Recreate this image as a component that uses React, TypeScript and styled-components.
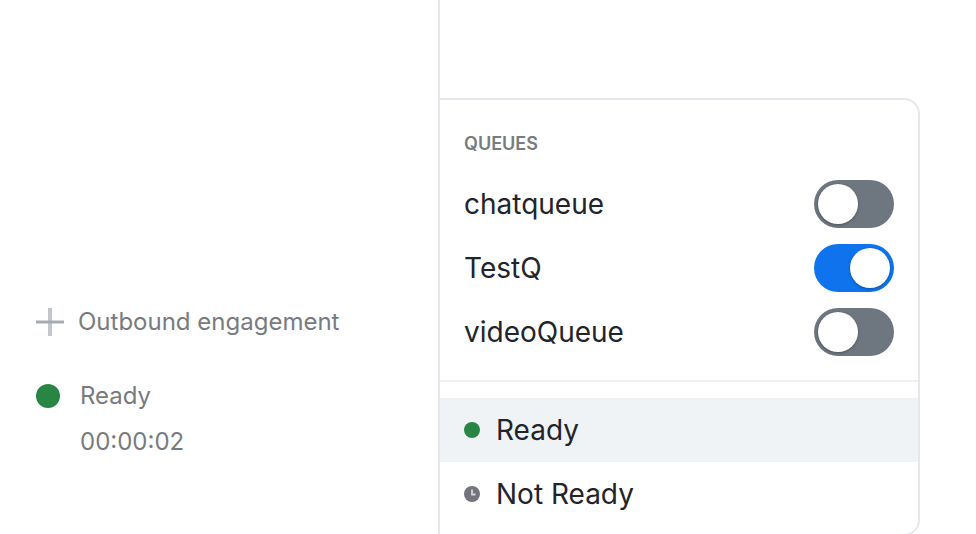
import React, { useState } from "react";
import styled, { createGlobalStyle } from "styled-components";

const GlobalStyle = createGlobalStyle`
  *, *::before, *::after { box-sizing: border-box; }
  body { margin: 0; background: #fff; color: #23242b; font-family: Inter, "Liberation Sans", sans-serif; overflow: hidden; }
  button { font: inherit; color: inherit; border: 0; padding: 0; background: none; text-align: left; cursor: pointer; }
`;

const Page = styled.div`
  display: grid;
  grid-template-columns: 440fr 536fr;
  height: 100vh;
  overflow: hidden;
`;

const Sidebar = styled.aside`
  display: flex;
  flex-direction: column;
  justify-content: flex-end;
  border-right: 2px solid #e4e8ec;
  padding: 0 36px 78px;
  color: #777b80;
  font-size: 24px;
  line-height: 32px;
`;

const Outbound = styled.button`
  display: flex;
  align-items: center;
  gap: 14px;
  white-space: nowrap;
`;

const StatusButton = styled.button`
  display: grid;
  grid-template-columns: 24px 1fr;
  column-gap: 20px;
  row-gap: 14px;
  align-items: center;
  margin-top: 42px;
`;

const Timer = styled.time`
  grid-column: 2;
`;

const Dot = styled.span<{ $size: number }>`
  width: ${(p) => p.$size}px;
  height: ${(p) => p.$size}px;
  border-radius: 50%;
  background: #288544;
`;

const Content = styled.main`
  padding: 98px 56px 0 0;
`;

const Panel = styled.section`
  border: 2px solid #e4e8ec;
  border-left: 0;
  border-radius: 0 16px 16px 0;
  padding: 28px 0 8px;
`;

const Heading = styled.h2`
  margin: 0 0 12px;
  padding: 0 24px;
  color: #777b80;
  font-size: 18px;
  line-height: 32px;
  font-weight: 600;
`;

const QueueRow = styled.label`
  display: flex;
  align-items: center;
  justify-content: space-between;
  height: 64px;
  padding: 0 24px;
  font-size: 28px;
  cursor: pointer;
`;

const Toggle = styled.input`
  appearance: none;
  width: 80px;
  height: 48px;
  margin: 0;
  padding: 4px;
  border-radius: 24px;
  background: #6e767f;
  display: flex;
  cursor: pointer;
  &::before {
    content: "";
    width: 40px;
    height: 40px;
    border-radius: 50%;
    background: #fff;
    box-shadow: 0 1px 3px rgba(0, 0, 0, 0.3);
  }
  &:checked { background: #0f73ee; justify-content: flex-end; }
`;

const StateList = styled.div`
  margin-top: 16px;
  border-top: 2px solid #f0f1f2;
  padding-top: 16px;
`;

const StateOption = styled.button<{ $active?: boolean }>`
  display: flex;
  align-items: center;
  gap: 16px;
  width: 100%;
  height: 64px;
  padding: 0 24px;
  font-size: 28px;
  background: ${(p) => (p.$active ? "#eff3f6" : "transparent")};
`;

const PlusIcon = () => (
  <svg width="28" height="28" viewBox="0 0 28 28" fill="none" aria-hidden="true">
    <path d="M14 0V28" stroke="#c3c6ca" strokeWidth="4" />
    <path d="M0 14H28" stroke="#a6abb0" strokeWidth="3" />
  </svg>
);

const ClockIcon = () => (
  <svg width="16" height="16" viewBox="0 0 16 16" aria-hidden="true">
    <circle cx="8" cy="8" r="8" fill="#74757c" />
    <path d="M8 3.5V8.5H11.5" fill="none" stroke="#d5d6d9" strokeWidth="1.8" />
  </svg>
);

export default function App() {
  const [queues, setQueues] = useState([
    { name: "chatqueue", on: false },
    { name: "TestQ", on: true },
    { name: "videoQueue", on: false },
  ]);
  const [ready, setReady] = useState(true);
  const toggle = (name: string) =>
    setQueues((list) => list.map((q) => (q.name === name ? { ...q, on: !q.on } : q)));

  return (
    <>
      <GlobalStyle />
      <Page>
        <Sidebar>
          <Outbound type="button"><PlusIcon />Outbound engagement</Outbound>
          <StatusButton type="button">
            <Dot $size={24} />
            <span>Ready</span>
            <Timer>00:00:02</Timer>
          </StatusButton>
        </Sidebar>
        <Content>
          <Panel>
            <Heading>QUEUES</Heading>
            {queues.map((q) => (
              <QueueRow key={q.name}>
                {q.name}
                <Toggle type="checkbox" role="switch" checked={q.on} onChange={() => toggle(q.name)} />
              </QueueRow>
            ))}
            <StateList>
              <StateOption type="button" $active={ready} onClick={() => setReady(true)}>
                <Dot $size={16} />Ready
              </StateOption>
              <StateOption type="button" $active={!ready} onClick={() => setReady(false)}>
                <ClockIcon />Not Ready
              </StateOption>
            </StateList>
          </Panel>
        </Content>
      </Page>
    </>
  );
}
